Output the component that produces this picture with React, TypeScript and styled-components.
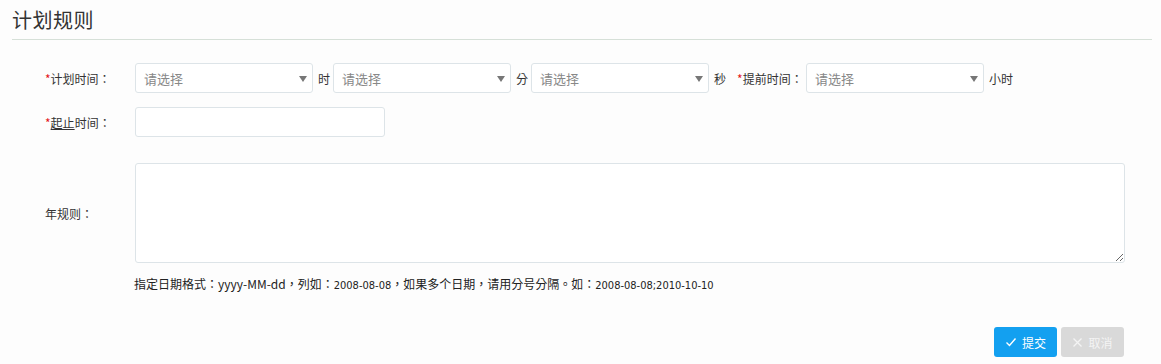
import React from 'react';
import styled, { createGlobalStyle } from 'styled-components';

const GlobalStyle = createGlobalStyle`
  html, body {
    margin: 0;
    padding: 0;
    background: #fdfdfd;
    font-family: "Noto Sans CJK TC", "Noto Sans CJK SC", sans-serif;
    font-size: 12px;
    color: #333;
  }
  * {
    box-sizing: border-box;
  }
`;

const Page = styled.div`
  width: 1161px;
  height: 364px;
  padding: 0 9px 0 12px;
`;

const Header = styled.div`
  height: 40px;
  border-bottom: 1px solid #d6e0d8;
  display: flex;
  align-items: flex-end;
`;

const Title = styled.h1`
  margin: 0 0 5px 0;
  font-family: "Noto Sans CJK SC", sans-serif;
  font-size: 20px;
  font-weight: 400;
  line-height: 28px;
  color: #333;
  letter-spacing: 0.5px;
`;

const Form = styled.div`
  padding: 23px 0 0 33px;
`;

const Row = styled.div<{ $gap?: number }>`
  display: flex;
  align-items: center;
  margin-bottom: ${p => p.$gap ?? 15}px;
`;

const Label = styled.div<{ $width?: number }>`
  width: ${p => p.$width ?? 90}px;
  flex-shrink: 0;
  color: #333;
  white-space: nowrap;
`;

const Req = styled.span`
  color: #e4161b;
`;

const Under = styled.span`
  text-decoration: underline;
`;

const SelectBox = styled.div`
  width: 178px;
  height: 30px;
  border: 1px solid #dde4e8;
  border-radius: 3px;
  background: #fff;
  display: flex;
  align-items: center;
  justify-content: space-between;
  padding: 0 5px 0 8px;
  color: #888;
  font-family: "Noto Sans CJK SC", sans-serif;
  font-size: 13px;
`;

const Caret = styled.span`
  width: 0;
  height: 0;
  border-left: 4px solid transparent;
  border-right: 4px solid transparent;
  border-top: 6px solid #777;
  margin-top: 2px;
`;

const Unit = styled.span<{ $left?: number; $right?: number }>`
  margin: 0 ${p => p.$right ?? 3}px 0 ${p => p.$left ?? 5}px;
  color: #333;
  white-space: nowrap;
`;

const TextInput = styled.div`
  width: 250px;
  height: 30px;
  border: 1px solid #dde4e8;
  border-radius: 3px;
  background: #fff;
`;

const TextArea = styled.textarea`
  width: 990px;
  height: 100px;
  border: 1px solid #dde4e8;
  border-radius: 3px;
  background: #fff;
  margin: 0;
  font: inherit;
`;

const Help = styled.div`
  margin: 0 0 0 89px;
  color: #222;
  line-height: 16px;
`;

const Num = styled.span`
  font-family: "DejaVu Sans Condensed", "Liberation Sans Narrow", sans-serif;
  font-size: 11px;
`;

const Actions = styled.div`
  display: flex;
  justify-content: flex-end;
  gap: 4px;
  padding-right: 28px;
  margin-top: 33px;
`;

const Button = styled.button<{ $kind: 'primary' | 'disabled' }>`
  width: 63px;
  height: 30px;
  border: none;
  border-radius: 3px;
  background: ${p => (p.$kind === 'primary' ? '#13a0f0' : '#d9d9d9')};
  color: ${p => (p.$kind === 'primary' ? '#fff' : '#f4f4f4')};
  font-family: "Noto Sans CJK SC", sans-serif;
  font-size: 12px;
  display: flex;
  align-items: center;
  justify-content: center;
  gap: 5px;
  padding: 0;
`;

const Select = () => (
  <SelectBox>
    <span>请选择</span>
    <Caret />
  </SelectBox>
);

const App = () => (
  <Page>
    <GlobalStyle />
    <Header>
      <Title>计划规则</Title>
    </Header>
    <Form>
      <Row $gap={14}>
        <Label>
          <Req>*</Req>计划时间：
        </Label>
        <Select />
        <Unit>时</Unit>
        <Select />
        <Unit>分</Unit>
        <Select />
        <Unit $right={11}>秒</Unit>
        <Label $width={69}>
          <Req>*</Req>提前时间：
        </Label>
        <Select />
        <Unit>小时</Unit>
      </Row>
      <Row $gap={26}>
        <Label>
          <Req>*</Req>
          <Under>起止</Under>时间：
        </Label>
        <TextInput />
      </Row>
      <Row $gap={13}>
        <Label>年规则：</Label>
        <TextArea />
      </Row>
      <Help>
        指定日期格式：yyyy-MM-dd，列如：<Num>2008-08-08</Num>，如果多个日期，请用分号分隔。如：
        <Num>2008-08-08;2010-10-10</Num>
      </Help>
      <Actions>
        <Button $kind="primary">
          <svg width="12" height="12" viewBox="0 0 12 12">
            <path d="M1.5 6.5 L4.5 9.5 L10.5 2.5" fill="none" stroke="#fff" strokeWidth="1.4" />
          </svg>
          提交
        </Button>
        <Button $kind="disabled">
          <svg width="11" height="11" viewBox="0 0 11 11">
            <path d="M1.5 1.5 L9.5 9.5 M9.5 1.5 L1.5 9.5" fill="none" stroke="#f4f4f4" strokeWidth="1.3" />
          </svg>
          取消
        </Button>
      </Actions>
    </Form>
  </Page>
);

export default App;
